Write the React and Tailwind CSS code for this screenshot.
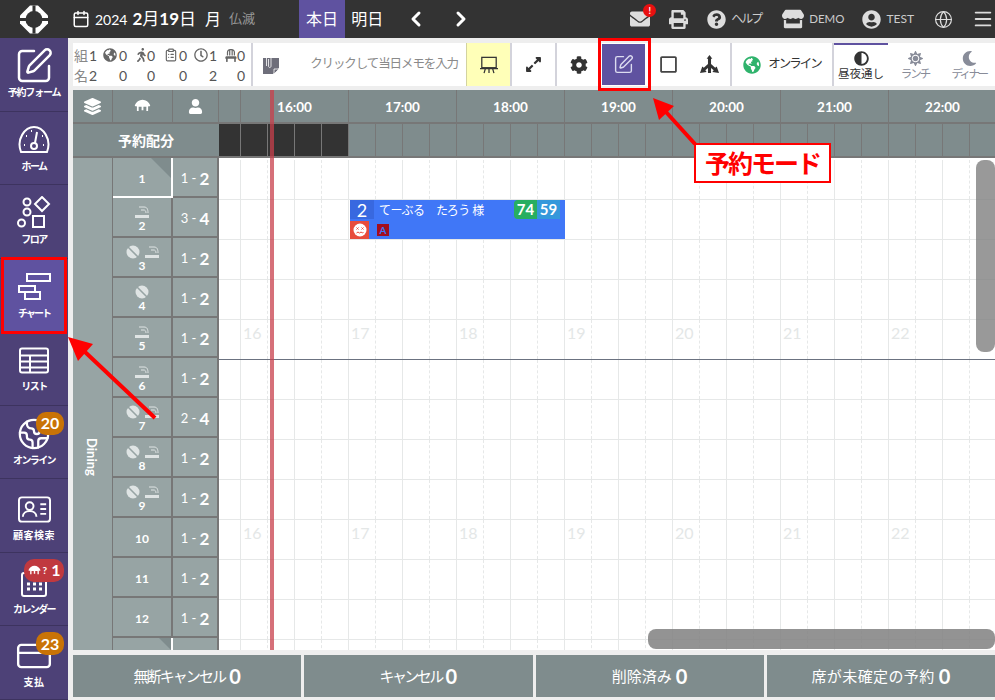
import { Calendar, ChevronLeft, ChevronRight, ClipboardList, CreditCard, Earth, Globe, Menu, SquarePen } from 'lucide-react'
import {
  FaAdjust, FaChair, FaCog, FaEnvelope, FaExpandAlt, FaGlobeAmericas, FaLayerGroup, FaMoon, FaPrint,
  FaQuestionCircle, FaRegClock, FaRegSquare, FaStore, FaSun, FaUser, FaUserCircle, FaWalking,
} from 'react-icons/fa'

const Logo = () => (
  <svg viewBox="0 0 28 28" className="w-[28px] h-[29px]">
    <path d="M10 0 H18 L28 10 V18 L18 28 H10 L0 18 V10 Z" fill="white" />
    <circle cx="14" cy="14" r="8.5" fill="#333333" />
    <path d="M14 0 V28 M0 14 H28" stroke="#333333" strokeWidth="3" />
  </svg>
)

const TableIcon = ({ className }) => (
  <svg viewBox="0 0 24 20" className={className} fill="currentColor">
    <path d="M12 1 C17 1 21 4 23 9 C23 11 20 11 20 10 V17 H17.5 V11 H13.3 V16 H10.7 V11 H6.5 V17 H4 V10 C4 11 1 11 1 9 C3 4 7 1 12 1 Z" />
  </svg>
)

const NoGlobe = () => (
  <svg viewBox="0 0 14 14" className="w-[14px] h-[14px] text-[#dfe4e4]">
    <circle cx="7" cy="7" r="6.5" fill="currentColor" />
    <path d="M1.5 1.5 L12.5 12.5" stroke="#97a4a4" strokeWidth="1.6" />
  </svg>
)

const SmokeIcon = () => (
  <svg viewBox="0 0 14 12" className="w-[14px] h-[12px] text-[#dfe4e4]" fill="none" stroke="currentColor">
    <rect x="0" y="9" width="14" height="3" fill="currentColor" stroke="none" />
    <path d="M4 1 H9 C12 1 13 3 13 7 M6 4 H9 C10 4 11 5 11 7" strokeWidth="1" />
  </svg>
)

const GaugeIcon = () => (
  <svg viewBox="0 0 34 30" className="w-[34px] h-[30px]" fill="none" stroke="currentColor" strokeWidth="2">
    <path d="M4 27 C-1 14 8 2 17 2 C26 2 35 14 30 27 Z" />
    <circle cx="17" cy="21" r="3" />
    <path d="M18 18 L20 7" />
    <path d="M7 20 h1 M9 11 h1 M14 6 h1 M26 20 h1 M25 11 h1" strokeWidth="2" />
  </svg>
)

const ShapesIcon = () => (
  <svg viewBox="0 0 34 34" className="w-[34px] h-[34px]" fill="none" stroke="currentColor" strokeWidth="2">
    <circle cx="10" cy="6" r="3.5" />
    <circle cx="10" cy="16" r="3.5" />
    <circle cx="4.5" cy="27" r="3.5" />
    <path d="M25 1 L32 8 L25 15 L18 8 Z" />
    <rect x="16" y="20" width="11" height="11" />
  </svg>
)

const ChartIcon = () => (
  <svg viewBox="0 0 33 27" className="w-[33px] h-[27px]" fill="none" stroke="currentColor" strokeWidth="2">
    <rect x="9" y="1" width="23" height="7" />
    <rect x="1" y="13" width="16" height="6" />
    <rect x="7" y="19" width="15" height="7" />
  </svg>
)

const ListIcon = () => (
  <svg viewBox="0 0 30 26" className="w-[30px] h-[27px]" fill="none" stroke="currentColor" strokeWidth="2">
    <rect x="1" y="1" width="28" height="24" rx="2" />
    <path d="M1 8 H29 M1 14 H29 M1 20 H29 M11 8 V25" />
  </svg>
)

const ContactIcon = () => (
  <svg viewBox="0 0 34 27" className="w-[33px] h-[27px]" fill="none" stroke="currentColor" strokeWidth="2">
    <rect x="1" y="1" width="32" height="25" rx="3" />
    <circle cx="12" cy="10" r="4" />
    <path d="M5 21 C5 13 19 13 19 21 M23 8 H29 M23 13 H29 M23 18 H29" />
  </svg>
)

const CalendarIcon = () => (
  <svg viewBox="0 0 26 28" className="w-[26px] h-[28px]" fill="none" stroke="currentColor" strokeWidth="2">
    <rect x="1" y="4" width="24" height="23" rx="2" />
    <path d="M6 15 h3 M12 15 h3 M18 15 h3 M6 20 h3 M12 20 h3 M18 20 h3" strokeWidth="3" />
  </svg>
)

const BoardIcon = () => (
  <svg viewBox="0 0 20 20" className="w-[18px] h-[18px]" fill="none" stroke="#333" strokeWidth="1.4">
    <rect x="2" y="1.5" width="16" height="11.5" />
    <path d="M0 14 H20 M6 14 L4.5 19 M10 14 V19 M14 14 L15.5 19" />
  </svg>
)

const BranchIcon = () => (
  <svg viewBox="0 0 22 20" className="w-[21px] h-[19px]" fill="#333">
    <path d="M11 0 L14 4 H12.6 V9.5 L17 13.5 L18.6 12 L21 19 L14 17.8 L15.4 16 L12.6 13.6 V19 H9.4 V13.6 L6.6 16 L8 17.8 L1 19 L3.4 12 L5 13.5 L9.4 9.5 V4 H8 Z" />
  </svg>
)

const NoteIcon = () => (
  <svg viewBox="0 0 16 19" className="w-[16px] h-[19px]">
    <path d="M0 3 H16 V13 L10 19 H0 Z" fill="#6e6e7a" />
    <path d="M11 19 V14 H16 Z" fill="#6e6e7a" stroke="white" strokeWidth="0.8" />
    <path d="M3.5 11 V3 C3.5 0 8 0 8 3 V11 C8 13 5.5 13 5.5 11 V4" fill="none" stroke="white" strokeWidth="0.8" />
  </svg>
)

const Badge = ({ children, className }) => (
  <span className={`absolute top-[6px] right-[4px] h-[23px] rounded-[10px] flex items-center justify-center text-white text-[16px] font-bold ${className}`}>
    {children}
  </span>
)

const SIDE = [
  { label: '予約フォーム', track: 'tracking-[-1.2px]', icon: <SquarePen size={40} strokeWidth={1.5} /> },
  { label: 'ホーム', track: 'tracking-[-1.5px]', icon: <GaugeIcon /> },
  { label: 'フロア', track: 'tracking-[-1.5px]', icon: <ShapesIcon /> },
  { label: 'チャート', track: 'tracking-[-2px]', icon: <ChartIcon />, active: true },
  { label: 'リスト', track: 'tracking-[-1.5px]', icon: <ListIcon /> },
  { label: 'オンライン', track: 'tracking-[-1.6px]', icon: <Earth size={34} strokeWidth={1.6} />, badge: <Badge className="w-[28px] bg-[#c97306]">20</Badge> },
  { label: '顧客検索', track: 'tracking-[0.5px]', low: true, icon: <ContactIcon /> },
  {
    label: 'カレンダー',
    track: 'tracking-[-1.6px]',
    low: true,
    icon: <CalendarIcon />,
    badge: (
      <Badge className="w-[40px] gap-[2px] bg-[#c0393f]">
        <TableIcon className="w-[13px] h-[11px]" />
        <span className="text-[10px]">?</span>
        <span className="ml-[2px]">1</span>
      </Badge>
    ),
  },
  { label: '支払', track: 'tracking-[0.5px]', low: true, icon: <CreditCard size={38} strokeWidth={1.5} />, badge: <Badge className="w-[28px] bg-[#c97306]">23</Badge> },
]

const STATS = [
  { top: <span className="text-[14px] text-[#888]">組</span>, a: 1, b: 2, label: '名' },
  { top: <FaGlobeAmericas size={14} className="text-[#666]" />, a: 0, b: 0 },
  { top: <FaWalking size={14} className="ml-[3px] text-[#666]" />, a: 0, b: 0 },
  { top: <ClipboardList size={14} className="ml-[3px] text-[#666]" />, a: 0, b: 0 },
  { top: <FaRegClock size={14} className="ml-[1px] text-[#666]" />, a: 1, b: 2 },
  { top: <FaChair size={13} className="ml-[2px] text-[#666]" />, a: 0, b: 0 },
]

const TABLES = [
  { no: 1, cap: '1', max: 2, selected: true },
  { no: 2, cap: '3', max: 4, smoke: true },
  { no: 3, cap: '1', max: 2, smoke: true, noweb: true },
  { no: 4, cap: '1', max: 2, noweb: true },
  { no: 5, cap: '1', max: 2, smoke: true },
  { no: 6, cap: '1', max: 2, smoke: true },
  { no: 7, cap: '2', max: 4, smoke: true, noweb: true },
  { no: 8, cap: '1', max: 2, smoke: true, noweb: true },
  { no: 9, cap: '1', max: 2, smoke: true, noweb: true },
  { no: 10, cap: '1', max: 2 },
  { no: 11, cap: '1', max: 2 },
  { no: 12, cap: '1', max: 2 },
]

const HOURS = ['16:00', '17:00', '18:00', '19:00', '20:00', '21:00', '22:00']
const SLOTS = Array.from({ length: 29 }, (_, i) => i)
const RIGHT_ROWS = Array.from({ length: 13 }, (_, i) => i)

const TOTALS = [
  { label: '無断キャンセル', track: 'tracking-[-1.9px]' },
  { label: 'キャンセル', track: 'tracking-[-2.6px]' },
  { label: '削除済み', track: 'tracking-[0px]' },
  { label: '席が未確定の予約', track: 'tracking-[0.4px]' },
]

function ToolButton({ children, className = '' }) {
  return <div className={`h-full shrink-0 flex items-center justify-center border-r-[2px] border-[#d3d3db] ${className}`}>{children}</div>
}

function Period({ icon, label, active, track = '' }) {
  return (
    <div className={`w-[54px] h-full shrink-0 flex flex-col items-center justify-center border-t-[2px] ${active ? 'border-[#5f52a0] text-[#333]' : 'border-transparent text-[#888c99]'}`}>
      {icon}
      <span className={`text-[11.5px] leading-[14px] mt-[1px] whitespace-nowrap ${track}`}>{label}</span>
    </div>
  )
}

function TableRow({ t }) {
  return (
    <div className="flex h-[40px]">
      <div className={`relative w-[60px] shrink-0 flex flex-col items-center justify-center pt-[3px] bg-[#97a4a4] border-r-[2px] border-b-[2px] ${t.selected ? 'border-white' : 'border-[#777]'}`}>
        {t.selected && <span className="absolute top-0 right-0 w-0 h-0 border-t-[20px] border-l-[20px] border-t-[#7f8c8d] border-l-transparent" />}
        {(t.smoke || t.noweb) && (
          <div className="flex items-center gap-[5px] h-[14px]">
            {t.noweb && <NoGlobe />}
            {t.smoke && <SmokeIcon />}
          </div>
        )}
        <span className="text-[12px] font-bold text-white leading-[14px]">{t.no}</span>
      </div>
      <div className="w-[46px] shrink-0 flex items-center justify-center gap-[3px] pt-[3px] bg-[#97a4a4] border-r-[2px] border-b-[2px] border-[#777] text-white">
        <span className="text-[13px]">{t.cap} -</span>
        <span className="text-[17px] font-bold">{t.max}</span>
      </div>
    </div>
  )
}

function GridRow({ row }) {
  const line = row === 4 ? 'border-[#6b7280]' : 'border-[#e6e8e8]'
  return (
    <div className={`flex h-[40px] border-b-[1px] ${line}`}>
      {SLOTS.map(i => (
        <div
          key={i}
          className={`relative h-full shrink-0 ${i === 0 ? 'w-[22px]' : 'w-[27px]'} ${i % 2 === 0 ? 'border-r-[1px] border-[#e6e8e8]' : 'border-r-[1px] border-dashed border-[#e6e8e8]'}`}
        >
          {(row === 4 || row === 9) && i % 4 === 1 && (
            <span className="absolute left-[2px] top-[3px] text-[16px] text-[#e4e7e7] leading-[20px]">{16 + (i - 1) / 4}</span>
          )}
        </div>
      ))}
    </div>
  )
}

export default function App() {
  return (
    <div className="relative w-[995px] h-[700px] overflow-hidden flex flex-col bg-[#eeeeee] font-['Lato','Noto_Sans_CJK_JP',sans-serif]">
      {/* Top bar */}
      <header className="h-[38px] shrink-0 flex items-center bg-[#333333] text-white whitespace-nowrap">
        <div className="w-[68px] shrink-0 flex justify-center"><Logo /></div>
        <Calendar size={18} className="ml-[4px] shrink-0" />
        <span className="ml-[5px] text-[14px]">2024</span>
        <span className="ml-[5px] text-[17px]"><b>2</b>月<b>19</b>日</span>
        <span className="ml-[9px] text-[16px]">月</span>
        <span className="ml-[8px] text-[13px] text-[#999]">仏滅</span>
        <div className="ml-[44px] w-[46px] shrink-0 h-full flex items-center justify-center bg-[#5f52a0] text-[16px]">本日</div>
        <span className="ml-[6px] text-[16px]">明日</span>
        <ChevronLeft size={24} strokeWidth={3} className="ml-[21px] shrink-0" />
        <ChevronRight size={24} strokeWidth={3} className="ml-[21px] shrink-0" />
        <div className="relative ml-[157px] shrink-0">
          <FaEnvelope size={20} className="text-[#dddddd]" />
          <span className="absolute -top-[5px] -right-[6px] w-[13px] h-[13px] rounded-full bg-[#e81010] text-[9px] font-bold flex items-center justify-center">!</span>
        </div>
        <FaPrint size={19} className="ml-[19px] shrink-0 text-[#dddddd]" />
        <FaQuestionCircle size={19} className="ml-[19px] shrink-0 text-[#dddddd]" />
        <span className="ml-[5px] text-[12px] text-[#cccccc] tracking-[-2px]">ヘルプ</span>
        <FaStore size={22} className="ml-[21px] shrink-0 text-[#dddddd]" />
        <span className="ml-[5px] text-[11.5px] text-[#cccccc]">DEMO</span>
        <FaUserCircle size={19} className="ml-[18px] shrink-0 text-[#dddddd]" />
        <span className="ml-[5px] text-[12px] text-[#cccccc]">TEST</span>
        <Globe size={19} strokeWidth={1.5} className="ml-[20px] shrink-0 text-[#dddddd]" />
        <Menu size={22} className="ml-[19px] shrink-0 text-[#dddddd]" />
      </header>

      <div className="flex-1 flex min-h-0">
        {/* Sidebar */}
        <aside className="w-[68px] shrink-0 grid grid-rows-9 bg-[#4d4177] text-white">
          {SIDE.map(item => (
            <div
              key={item.label}
              className={`relative min-h-0 flex flex-col items-center ${item.low ? 'pt-[12px]' : 'pt-[10px]'} ${item.active ? 'mx-[3px] bg-[#5f52a0] outline-[3px] -outline-offset-[1px] outline-[#ff0000]' : 'border-b-[1px] border-[#3d335f]'}`}
            >
              <div className="h-[36px] flex items-center justify-center">{item.icon}</div>
              <span className={`mt-[1px] text-[10px] font-bold leading-[14px] whitespace-nowrap ${item.track}`}>{item.label}</span>
              {item.badge}
            </div>
          ))}
        </aside>

        {/* Main */}
        <main className="flex-1 min-w-0 flex flex-col pl-[5px]">
          {/* Toolbar */}
          <div className="mt-[5px] h-[43px] shrink-0 flex items-center bg-white">
            <div className="w-[180px] h-full shrink-0 flex flex-col justify-center border-r-[2px] border-[#d3d3db] pl-[1px] text-[14px] text-[#555]">
              <div className="grid grid-cols-[29px_30px_28px_32px_30px_28px] h-[20px]">
                {STATS.map((s, i) => (
                  <div key={i} className="flex items-center justify-between pr-[6px]">
                    {s.top}
                    <span>{s.a}</span>
                  </div>
                ))}
              </div>
              <div className="grid grid-cols-[29px_30px_28px_32px_30px_28px] h-[20px]">
                {STATS.map((s, i) => (
                  <div key={i} className="flex items-center justify-between pr-[6px]">
                    {s.label ? <span className="text-[#888]">{s.label}</span> : <span />}
                    <span>{s.b}</span>
                  </div>
                ))}
              </div>
            </div>
            <div className="w-[213px] h-full shrink-0 flex items-center pl-[10px] pr-[8px]">
              <NoteIcon />
              <span className="ml-auto text-[12.5px] text-[#8a8a8a] tracking-[-1.1px] whitespace-nowrap">クリックして当日メモを入力</span>
            </div>
            <ToolButton className="w-[46px] bg-[#ffffb8] border-l-[1px] border-l-[#d3d3a0]"><BoardIcon /></ToolButton>
            <ToolButton className="w-[45px]"><FaExpandAlt size={17} className="text-[#333]" /></ToolButton>
            <div className="w-[44px] h-full shrink-0 flex items-center justify-center"><FaCog size={18} className="text-[#333]" /></div>
            <div className="w-[45px] h-full shrink-0 flex items-center justify-center bg-[#5f52a0] border-[1px] border-white">
              <SquarePen size={21} strokeWidth={1.6} className="text-[#dcdcf0]" />
            </div>
            <div className="w-[40px] h-full shrink-0 flex items-center justify-center ml-[2px]"><FaRegSquare size={19} className="text-[#444]" /></div>
            <ToolButton className="w-[44px]"><BranchIcon /></ToolButton>
            <ToolButton className="w-[102px] gap-[7px]">
              <FaGlobeAmericas size={18} className="text-[#2fb36c]" />
              <span className="text-[12.5px] text-[#333] tracking-[-2px] whitespace-nowrap">オンライン</span>
            </ToolButton>
            <Period active icon={<FaAdjust size={15} />} label="昼夜通し" />
            <Period icon={<FaSun size={15} />} label="ランチ" track="tracking-[-2px]" />
            <Period icon={<FaMoon size={15} />} label="ディナー" track="tracking-[-2.5px]" />
          </div>

          {/* Chart */}
          <section className="relative mt-[4px] h-[560px] shrink-0 overflow-hidden bg-white">
            <div className="flex h-[34px] bg-[#7f8c8d] border-b-[2px] border-[#777] text-white">
              <div className="w-[40px] shrink-0 flex items-center justify-center border-r-[1px] border-[#777]"><FaLayerGroup size={17} /></div>
              <div className="w-[60px] shrink-0 flex items-center justify-center border-r-[1px] border-[#777]"><TableIcon className="w-[17px] h-[14px]" /></div>
              <div className="w-[46px] shrink-0 flex items-center justify-center border-r-[1px] border-[#777]"><FaUser size={15} /></div>
              <div className="w-[22px] shrink-0 border-r-[1px] border-[#777]" />
              {HOURS.map(h => (
                <div key={h} className="w-[108px] shrink-0 flex items-center justify-center pt-[3px] border-r-[1px] border-[#777] text-[13.5px] font-bold">{h}</div>
              ))}
            </div>
            <div className="flex h-[34px] bg-[#7f8c8d] border-b-[2px] border-[#777]">
              <div className="w-[146px] shrink-0 flex items-center justify-center text-[14px] font-bold text-white">予約配分</div>
              {SLOTS.map(i => (
                <div key={i} className={`h-full shrink-0 border-r-[1px] border-[#777] ${i === 0 ? 'w-[22px]' : 'w-[27px]'} ${i < 5 ? 'bg-[#333333]' : ''}`} />
              ))}
            </div>
            <div className="flex">
              <div className="w-[40px] shrink-0 h-[492px] bg-[#97a4a4] border-r-[1px] border-[#777] flex justify-center pt-[280px] pr-[3px]">
                <span className="[writing-mode:vertical-rl] text-[13px] font-bold text-white h-fit">Dining</span>
              </div>
              <div className="w-[106px] shrink-0">
                {TABLES.map(t => <TableRow key={t.no} t={t} />)}
                <div className="flex h-[12px]">
                  <div className="relative w-[60px] shrink-0 bg-[#97a4a4] border-r-[2px] border-white">
                    <span className="absolute top-0 right-0 w-0 h-0 border-t-[12px] border-l-[12px] border-t-[#7f8c8d] border-l-transparent" />
                  </div>
                  <div className="w-[46px] shrink-0 bg-[#97a4a4] border-r-[2px] border-[#777]" />
                </div>
              </div>
              <div className="flex-1 min-w-0 pt-[2px] overflow-hidden">
                {RIGHT_ROWS.map(r => <GridRow key={r} row={r} />)}
              </div>
            </div>

            {/* Reservation block */}
            <div className="absolute left-[277px] top-[110px] w-[215px] h-[39px] flex flex-col bg-[#4077f7] text-white">
              <div className="flex h-[19px] items-center">
                <span className="w-[24px] h-full flex items-center justify-center bg-[#3868e0] text-[18px] leading-none">2</span>
                <span className="ml-[5px] pt-[3px] text-[12px] tracking-[-0.5px] whitespace-nowrap">てーぶる　たろう 様</span>
                <span className="ml-auto w-[23px] h-full flex items-center justify-center rounded-l-[4px] bg-[#27ae60] text-[15px] font-bold">74</span>
                <span className="mr-[5px] w-[23px] h-full flex items-center justify-center bg-[#3498db] text-[15px] font-bold">59</span>
              </div>
              <div className="flex flex-1 items-center mt-[2px]">
                <span className="w-[19px] h-full flex items-center justify-center bg-[#e74c3c]">
                  <svg viewBox="0 0 14 14" className="w-[14px] h-[14px]">
                    <circle cx="7" cy="7" r="6.5" fill="white" />
                    <path d="M3.5 4.5 l2 2 m0 -2 l-2 2 M8.5 4.5 l2 2 m0 -2 l-2 2 M3.5 10 l1.5 -1 1.5 1 1.5 -1 1.5 1 1 -1" stroke="#e74c3c" strokeWidth="1" fill="none" />
                  </svg>
                </span>
                <span className="ml-[8px] w-[12px] h-[12px] flex items-center justify-center bg-[#a30d1e] text-[#4077f7] text-[10px] font-bold">A</span>
              </div>
            </div>

            {/* Current time line */}
            <div className="absolute left-[197px] top-0 w-[4px] h-full bg-[#c8404c]/75" />

            {/* Scrollbars */}
            <div className="absolute right-0 top-[70px] w-[19px] h-[192px] rounded-[8px] bg-[#808080]/80" />
            <div className="absolute right-0 bottom-[1px] w-[347px] h-[20px] rounded-[8px] bg-[#808080]/85" />
          </section>

          {/* Footer totals */}
          <footer className="mt-[5px] h-[42px] shrink-0 grid grid-cols-4 gap-[3px]">
            {TOTALS.map(({ label, track }) => (
              <div key={label} className="flex items-center justify-center gap-[4px] bg-[#7f8c8d] text-white">
                <span className={`text-[15px] ${track}`}>{label}</span>
                <span className="text-[20px] font-bold">0</span>
              </div>
            ))}
          </footer>
        </main>
      </div>

      {/* Annotations */}
      <div className="absolute left-[598px] top-[38px] w-[53px] h-[53px] border-[3px] border-[#ff0000] pointer-events-none" />
      <div className="absolute left-[694px] top-[143px] w-[137px] h-[40px] flex items-center justify-center bg-white border-[2px] border-[#ff0000] text-[#ff0000] text-[25px] font-bold font-['Noto_Sans_CJK_JP',sans-serif] tracking-[-2px]">
        予約モード
      </div>
      <svg className="absolute inset-0 w-[995px] h-[700px] pointer-events-none" viewBox="0 0 995 700">
        <path d="M155 418 L84 351" stroke="#ff0000" strokeWidth="4" />
        <path d="M68 337 L93 344 L78 361 Z" fill="#ff0000" />
        <path d="M695 144 L666 112" stroke="#ff0000" strokeWidth="4" />
        <path d="M653 98 L674 106 L659 120 Z" fill="#ff0000" />
      </svg>
    </div>
  )
}
